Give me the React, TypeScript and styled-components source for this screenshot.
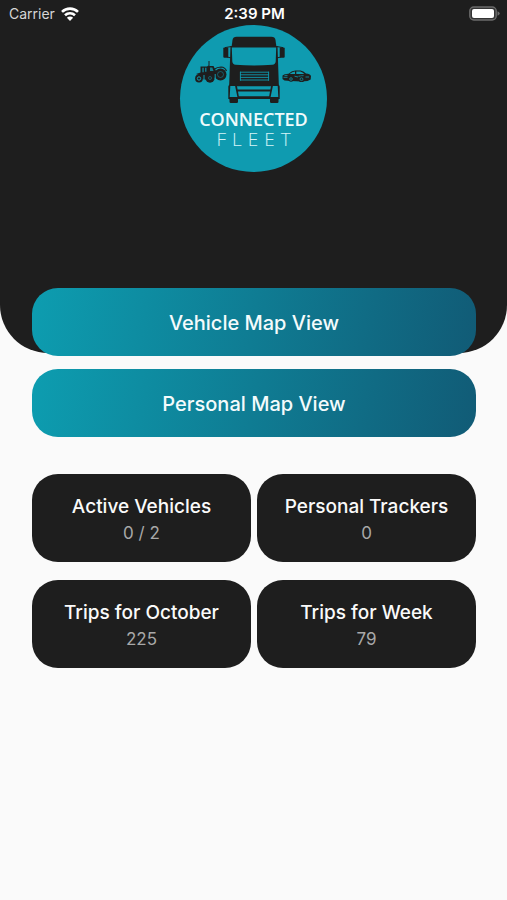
import React from 'react';
import styled, { createGlobalStyle } from 'styled-components';

const ink = '#1e1e1e';
const teal = '#0f9bb0';

const GlobalStyle = createGlobalStyle`
  *, *::before, *::after { box-sizing: border-box; }
  body {
    margin: 0;
    background: #fafafa;
    font-family: Inter, "Liberation Sans", sans-serif;
  }
`;

const Page = styled.div`
  min-height: 100vh;
  background: #fafafa;
`;

const Header = styled.header`
  min-height: 353px;
  padding-bottom: 65px;
  background: ${ink};
  border-radius: 0 0 48px 48px;
  display: flex;
  flex-direction: column;
  align-items: center;
`;

const StatusBar = styled.div`
  width: 100%;
  height: 25px;
  padding: 2px 7px 0 9px;
  display: grid;
  grid-template-columns: 1fr auto 1fr;
  align-items: center;
  color: #fff;
  font-size: 14px;
  line-height: 20px;
`;

const Carrier = styled.div`
  display: flex;
  align-items: center;
  gap: 6px;
  color: #d6d6d6;
`;

const Clock = styled.time`
  font-size: 15px;
  font-weight: 600;
`;

const BatteryIcon = styled.svg`
  justify-self: end;
`;

const Logo = styled.div`
  width: 147px;
  height: 147px;
  border-radius: 50%;
  background: ${teal};
  color: #f2fbfc;
  display: flex;
  flex-direction: column;
  align-items: center;
  font-family: "Open Sans", "Noto Sans", sans-serif;
  line-height: 20px;
`;

const LogoName = styled.span`
  font-size: 18px;
  font-weight: 600;
`;

const LogoSubname = styled.span`
  font-size: 19px;
  font-weight: 300;
  letter-spacing: 6px;
  padding-left: 6px;
  color: #d4f4f8;
`;

const Content = styled.main`
  margin-top: -65px;
  padding: 0 31px 32px 32px;
`;

const MapButtons = styled.nav`
  display: flex;
  flex-direction: column;
  gap: 13px;
`;

const MapButton = styled.button`
  height: 68px;
  padding: 2px 16px 0;
  border: 0;
  border-radius: 26px;
  background: linear-gradient(100deg, #0d9db0, #115b76);
  color: #f4fbfc;
  font: 500 20px/24px Inter, "Liberation Sans", sans-serif;
  cursor: pointer;
`;

const Stats = styled.section`
  margin-top: 37px;
  display: grid;
  grid-template-columns: 1fr 1fr;
  gap: 18px 6px;
`;

const StatCard = styled.article`
  min-height: 88px;
  padding-top: 3px;
  border-radius: 26px;
  background: ${ink};
  display: flex;
  flex-direction: column;
  align-items: center;
  justify-content: center;
  gap: 2px;
  text-align: center;
`;

const StatTitle = styled.h2`
  margin: 0;
  color: #fafafa;
  font-size: 19px;
  font-weight: 500;
  line-height: 24px;
`;

const StatValue = styled.p`
  margin: 0;
  color: #a8a8a8;
  font-size: 17px;
  line-height: 24px;
`;

const WifiIcon = () => (
  <svg width="18" height="14" viewBox="0 0 18 14" aria-label="Wi-Fi" fill="none" stroke="#fff" strokeWidth="2.6">
    <path d="M1 4.900a11.400 11.400 0 0 1 16 0" />
    <path d="M4 8.200a7.200 7.200 0 0 1 10 0" />
    <path d="M9 14 5.900 10.800a4.400 4.400 0 0 1 6.200 0z" fill="#fff" stroke="none" />
  </svg>
);

const Battery = () => (
  <BatteryIcon width="31" height="15" viewBox="0 0 31 15" aria-label="Battery full">
    <rect x="0.8" y="1" width="26.4" height="13" rx="4" fill="#343434" stroke="#6b6b6b" strokeWidth="1.4" />
    <rect x="3" y="3" width="22" height="9" rx="2" fill="#fff" />
    <path d="M28.500 5.200q2.200.8 2.200 2.300t-2.200 2.300z" fill="#6b6b6b" />
  </BatteryIcon>
);

const FleetDrawing = () => (
  <svg width="147" height="84" viewBox="0 0 147 84" aria-hidden="true" fill={ink}>
    {/* truck */}
    <path d="M51.500 22.500 52.500 15q.6-3.300 4-3.300h35q3.400 0 4 3.300l1 7.500z" />
    <rect x="43.300" y="22.400" width="5" height="10.400" rx="1" />
    <rect x="99.700" y="22.400" width="5" height="10.400" rx="1" />
    <path d="M45 22.600 51.500 21.500V33L47 32M103 22.600 96.500 21.500V33l4.500-1" fill="none" stroke={ink} strokeWidth="1" />
    <path d="M50.500 21h47l1.300 38.500.9 2V74H48.300V61.500l.9-2z" />
    <path d="M51.800 22.500h44.400l-.5 14q-.3 3-3.300 3.200-18.400 1.400-36.800 0-3-.2-3.300-3.200z" fill={teal} />
    <path d="M60 47.200h29M60 49.800h29M60 52.400h29M60 55h29M60.400 46.700v9M88.600 46.700v9" stroke={teal} strokeWidth=".9" />
    <path d="M50.300 61h4.800l2.300 11h-7.700zM97.700 61h-4.800l-2.300 11h7.700z" fill={teal} />
    <path d="M57 61.200h34l-.6 3.300H57.600zM58 66.500h32l-.8 4.800H58.800z" fill={teal} />
    <rect x="49.500" y="73" width="8.500" height="5" rx="1.200" />
    <rect x="90" y="73" width="8.500" height="5" rx="1.200" />
    {/* tractor */}
    <path d="M16 49 20.500 47.500V41.500h6.500l1.500-1v-4.500h1V41h4l2.500 5 2 4-6 4.500h-9l-3-4z" />
    <circle cx="19" cy="53.500" r="3.900" />
    <circle cx="30" cy="53" r="4.700" />
    <circle cx="40.500" cy="49.500" r="6" />
    <path d="M34 44.500q3-2.500 7-2.500 4 .2 5.500 4" fill="none" stroke={ink} strokeWidth="1.200" />
    <path d="M22.300 42.800h1.500v4.500h-1.500zM25 42.800h1.500v4H25zM30 42.500h2.300l1.200 3.500H30z" fill={teal} opacity=".75" />
    <g fill="none" stroke={teal}>
      <circle cx="19" cy="53.500" r="1.700" strokeWidth="1" />
      <circle cx="30" cy="53" r="1.500" strokeWidth=".7" opacity=".7" />
      <circle cx="40.500" cy="49.500" r="3" strokeWidth=".8" opacity=".6" />
      <path d="M24 50v6M35.200 49v5" strokeWidth="1" />
    </g>
    {/* car */}
    <path d="M102.500 50.500q1.500-1.500 6-1.700 3.500-3.200 7-3.200h5q3 .3 5.500 3 4 .4 5 2.300l-.3 3.700-3.200 1.300-6 .5-11-.3-6-.5-2-1.500z" />
    <path d="M109.500 49q3-2.500 5.500-2.500V49zM116.300 46.500h4q2.300.5 4 2.500h-8z" fill={teal} />
    <path d="M103.500 52.300h4M114.500 51.200l3.500.8M118.500 51.300l5-.6M125.500 52h3.500M104.500 50.400h3" stroke={teal} strokeWidth=".8" />
    <circle cx="111" cy="54" r="2.700" />
    <circle cx="121.500" cy="54.200" r="2.900" />
    <g fill="none" stroke={teal} strokeWidth=".7">
      <circle cx="111" cy="54" r="1.300" />
      <circle cx="121.500" cy="54.200" r="1.400" />
    </g>
  </svg>
);

const stats = [
  { title: 'Active Vehicles', value: '0 / 2' },
  { title: 'Personal Trackers', value: '0' },
  { title: 'Trips for October', value: '225' },
  { title: 'Trips for Week', value: '79' },
];

export default function App() {
  return (
    <>
      <GlobalStyle />
      <Page>
        <Header>
          <StatusBar>
            <Carrier>
              Carrier
              <WifiIcon />
            </Carrier>
            <Clock>2:39 PM</Clock>
            <Battery />
          </StatusBar>
          <Logo>
            <FleetDrawing />
            <LogoName>CONNECTED</LogoName>
            <LogoSubname>FLEET</LogoSubname>
          </Logo>
        </Header>
        <Content>
          <MapButtons>
            <MapButton type="button">Vehicle Map View</MapButton>
            <MapButton type="button">Personal Map View</MapButton>
          </MapButtons>
          <Stats>
            {stats.map(({ title, value }) => (
              <StatCard key={title}>
                <StatTitle>{title}</StatTitle>
                <StatValue>{value}</StatValue>
              </StatCard>
            ))}
          </Stats>
        </Content>
      </Page>
    </>
  );
}
